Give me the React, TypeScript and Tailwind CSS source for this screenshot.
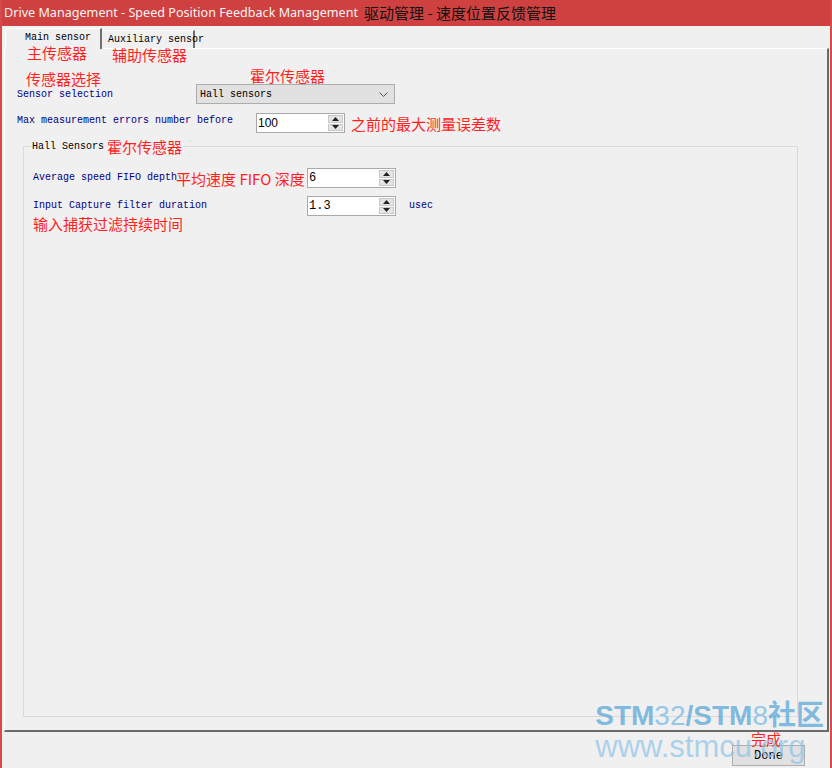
import React from 'react';

const mono = "font-['Liberation_Mono',monospace] text-[10px] leading-[12px]";
const note = "font-['Noto_Sans_CJK_SC',sans-serif] text-[15px] leading-[17px] text-[#ff1f1f] whitespace-nowrap";

const Spin = () => (
  <div className="flex w-[16px] flex-col gap-[1px] self-stretch py-[1px] pr-[1px]">
    <div className="flex flex-1 items-center justify-center border border-[#c8c8c8] bg-[#e4e4e4]">
      <svg width="7" height="4" viewBox="0 0 7 4"><path d="M3.5 0L7 4H0z" fill="#222" /></svg>
    </div>
    <div className="flex flex-1 items-center justify-center border border-[#c8c8c8] bg-[#e4e4e4]">
      <svg width="7" height="4" viewBox="0 0 7 4"><path d="M0 0h7L3.5 4z" fill="#222" /></svg>
    </div>
  </div>
);

const NumberBox = ({ value, sans }: { value: string; sans?: boolean }) => (
  <div className="flex h-[20px] w-[89px] items-stretch border border-[#a9a9a9] bg-white">
    <div
      className={
        'flex-1 pl-[1px] text-[12px] leading-[18px] text-black ' +
        (sans ? "font-['Liberation_Sans',sans-serif]" : "font-['Liberation_Mono',monospace]")
      }
    >
      {value}
    </div>
    <Spin />
  </div>
);

export default function App() {
  return (
    <div className="flex h-[768px] w-[832px] flex-col overflow-hidden border-x-2 border-[#d64a4a] bg-[#f0f0f0]">
      {/* title bar */}
      <div className="flex h-[26px] shrink-0 items-center bg-[#cf4040] pl-[2px] whitespace-nowrap">
        <span className="font-['Noto_Sans',sans-serif] text-[12.6px] text-[#f4f4f4]">
          Drive Management - Speed Position Feedback Management
        </span>
        <span className="ml-[6px] font-['Noto_Sans_CJK_SC',sans-serif] text-[15px] text-[#111]">驱动管理 - 速度位置反馈管理</span>
      </div>

      <div className="relative flex flex-1 flex-col">
        {/* tabs */}
        <div className="flex h-[22px] shrink-0 items-end pl-[3px]">
          <div className="relative z-10 -mb-px flex h-[21px] w-[97px] items-start border-t border-l border-white border-r-2 border-r-[#6f6f6f] bg-[#f0f0f0] pt-[3px] pl-[19px]">
            <span className={mono + ' text-black'}>Main sensor</span>
          </div>
          <div className="flex h-[18px] w-[93px] items-start border-t border-white border-r-2 border-r-[#6f6f6f] pt-[3px] pl-[6px]">
            <span className={mono + ' whitespace-nowrap text-black'}>Auxiliary sensor</span>
          </div>
        </div>

        {/* tab annotations */}
        <span className={note + ' absolute top-[18px] left-[25px] z-20'}>主传感器</span>
        <span className={note + ' absolute top-[20px] left-[110px] z-20'}>辅助传感器</span>

        {/* panel */}
        <div className="ml-[2px] mr-px flex flex-1 flex-col border-t border-l border-white border-r-2 border-b-2 border-r-[#6a6a6a] border-b-[#6a6a6a]">
          <div className="mt-[18px] flex h-[17px]">
            <div className="w-[245px] pl-[21px]">
              <span className={note}>传感器选择</span>
            </div>
            <span className={note}>霍尔传感器</span>
          </div>

          <div className="flex h-[20px] items-center">
            <div className={mono + ' w-[191px] pt-[1px] pl-[12px] text-[#000080]'}>Sensor selection</div>
            <div className="flex h-[20px] w-[199px] items-center justify-between border border-[#adadad] bg-[#e1e1e1] pr-[6px] pl-[3px]">
              <span className={mono + ' pt-[1px] text-black'}>Hall sensors</span>
              <svg width="9" height="5" viewBox="0 0 9 5">
                <path d="M0.5 0.5L4.5 4.5L8.5 0.5" fill="none" stroke="#555" strokeWidth="1" />
              </svg>
            </div>
          </div>

          <div className="mt-[9px] flex h-[20px] items-center">
            <div className={mono + ' w-[251px] self-start pt-[2px] pl-[12px] text-[#000080]'}>
              Max measurement errors number before
            </div>
            <NumberBox value="100" sans />
            <span className={note + ' ml-[6px]'}>之前的最大测量误差数</span>
          </div>

          {/* group box */}
          <fieldset className="mt-[5px] ml-[18px] h-[579px] w-[775px] border border-[#dadada] pb-0">
            <legend className="ml-[7px] flex items-center px-px">
              <span className={mono + ' text-black'}>Hall Sensors</span>
              <span className={note + ' ml-[3px]'}>霍尔传感器</span>
            </legend>

            <div className="mt-[13px] flex h-[20px] items-center pl-[9px]">
              <div className="flex w-[274px] items-center whitespace-nowrap">
                <span className={mono + ' text-[#000080]'}>Average speed FIFO depth</span>
                <span className={note + ' -ml-[1px]'}>平均速度 FIFO 深度</span>
              </div>
              <NumberBox value="6" />
            </div>

            <div className="mt-[8px] flex h-[20px] items-center pl-[9px]">
              <div className={mono + ' w-[274px] text-[#000080]'}>Input Capture filter duration</div>
              <NumberBox value="1.3" />
              <span className={mono + ' ml-[13px] text-[#000080]'}>usec</span>
            </div>
            <div className="-mt-[4px] pl-[9px]">
              <span className={note}>输入捕获过滤持续时间</span>
            </div>
          </fieldset>
        </div>

        {/* bottom bar */}
        <div className="flex h-[36px] shrink-0 justify-end pr-[25px]">
          <div className="mt-[13px] flex h-[21px] w-[73px] items-center justify-center border border-[#adadad] bg-[#e1e1e1]">
            <span className="font-['Liberation_Mono',monospace] text-[12px] leading-[14px] text-black">Done</span>
          </div>
        </div>

        {/* annotation over Done */}
        <span className={note + ' absolute bottom-[21px] left-[749px] z-20'}>完成</span>

        {/* watermark */}
        <div className="pointer-events-none absolute right-[6px] bottom-[6px] z-30 flex flex-col items-start font-['Liberation_Sans',sans-serif] leading-none">
          <div className="flex items-baseline text-[28px] text-[#3f9ad6]/65">
            <span className="font-bold">STM</span>
            <span className="text-[#7fbde6]/80">32</span>
            <span className="font-bold">/STM</span>
            <span className="text-[#7fbde6]/80">8</span>
            <span className="font-['Noto_Sans_CJK_SC',sans-serif] font-bold">社区</span>
          </div>
          <div className="mt-[1px] text-[31px] text-[#8cc3e8]/70">www.stmcu.org</div>
        </div>
      </div>
    </div>
  );
}
